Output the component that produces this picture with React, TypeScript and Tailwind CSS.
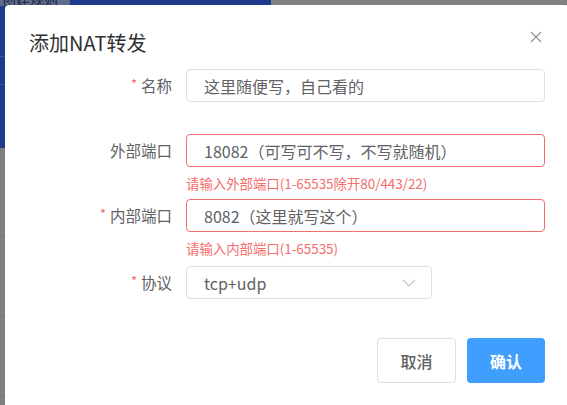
import React from "react";

// Faint table rows of the page that lies under the modal mask
const BACKDROP_ROWS = [
  { h: "h-[89px]", line: true },
  { h: "h-[80px]", line: true },
  { h: "h-[80px]", line: true },
  { h: "h-[50px]", line: true },
];

function Field({
  label,
  required,
  children,
  error,
  className = "",
}: {
  label: string;
  required?: boolean;
  children: React.ReactNode;
  error?: string;
  className?: string;
}) {
  return (
    <div className={`flex items-start ${className}`}>
      <div className="flex h-[33px] w-[157px] shrink-0 items-center justify-end pr-[14px] text-[15.5px] text-[#606266]">
        {required && <span className="mr-[4px] -mt-[3px] text-[13px] text-[#f56c6c]">*</span>}
        {label}
      </div>
      <div className="flex min-w-0 flex-1 flex-col">
        {children}
        {error && (
          <div className="mt-[10px] text-[13.4px] leading-[13px] text-[#f56c6c]">{error}</div>
        )}
      </div>
    </div>
  );
}

function TextBox({ value, invalid }: { value: string; invalid?: boolean }) {
  return (
    <div
      className={`flex h-[33px] items-center rounded-[4px] border px-[17px] text-[16px] text-[#606266] ${
        invalid ? "border-[#f56c6c]" : "border-[#dcdfe6]"
      }`}
    >
      {value}
    </div>
  );
}

export default function App() {
  return (
    <div className="relative h-[405px] w-[567px] overflow-hidden bg-[#808080] font-['Noto_Sans_CJK_SC','Noto_Sans',sans-serif]">
      {/* Page under the mask */}
      <div className="flex h-[148px] w-[271px] flex-col bg-[#1e3a8a]">
        <div className="-mt-[10px] w-[70px] bg-[#5d6b8c] pl-[2px] text-[14px] leading-[16px] text-[#1b2540]">
          创建规则
        </div>
        <div className="mt-[50px] border-b border-[#3a55a0]" />
        <div className="mt-[27px] border-b border-[#3a55a0]" />
      </div>
      <div className="flex flex-col">
        {BACKDROP_ROWS.map((r, i) => (
          <div key={i} className={`${r.h} border-b border-[#767676]`} />
        ))}
      </div>

      {/* Dialog */}
      <div className="absolute left-[5px] top-[5px] h-[460px] w-[564px] rounded-[4px] bg-white">
        <div className="px-[24px] pt-[26px]">
          <h2 className="text-[20px] leading-[24px] text-[#303133]">添加NAT转发</h2>
        </div>
        <button className="absolute right-[27px] top-[26px] flex h-[12px] w-[12px] items-center justify-center">
          <svg width="12" height="12" viewBox="0 0 12 12" fill="none" stroke="#909399" strokeWidth="1.2">
            <path d="M1 1L11 11M11 1L1 11" />
          </svg>
        </button>

        <div className="mt-[14px] px-[24px]">
          <Field label="名称" required className="mb-[32px]">
            <TextBox value="这里随便写，自己看的" />
          </Field>
          <Field label="外部端口" error="请输入外部端口(1-65535除开80/443/22)" className="mb-[9px]">
            <TextBox value="18082（可写可不写，不写就随机）" invalid />
          </Field>
          <Field label="内部端口" required error="请输入内部端口(1-65535)" className="mb-[11px]">
            <TextBox value="8082（这里就写这个）" invalid />
          </Field>
          <Field label="协议" required>
            <div className="flex h-[33px] w-[246px] items-center justify-between rounded-[4px] border border-[#dcdfe6] pl-[17px] pr-[15px] text-[16px] text-[#606266]">
              <span>tcp+udp</span>
              <svg width="14" height="8" viewBox="0 0 14 8" fill="none" stroke="#c0c4cc" strokeWidth="1.2">
                <path d="M1 1L7 7L13 1" />
              </svg>
            </div>
          </Field>

          <div className="mt-[39px] flex justify-end gap-[11px]">
            <button className="h-[45px] w-[79px] rounded-[4px] border border-[#dcdfe6] bg-white text-[16px] font-medium text-[#606266]">
              取消
            </button>
            <button className="h-[45px] w-[78px] rounded-[4px] bg-[#409eff] text-[16px] font-bold text-white">
              确认
            </button>
          </div>
        </div>
      </div>
    </div>
  );
}
